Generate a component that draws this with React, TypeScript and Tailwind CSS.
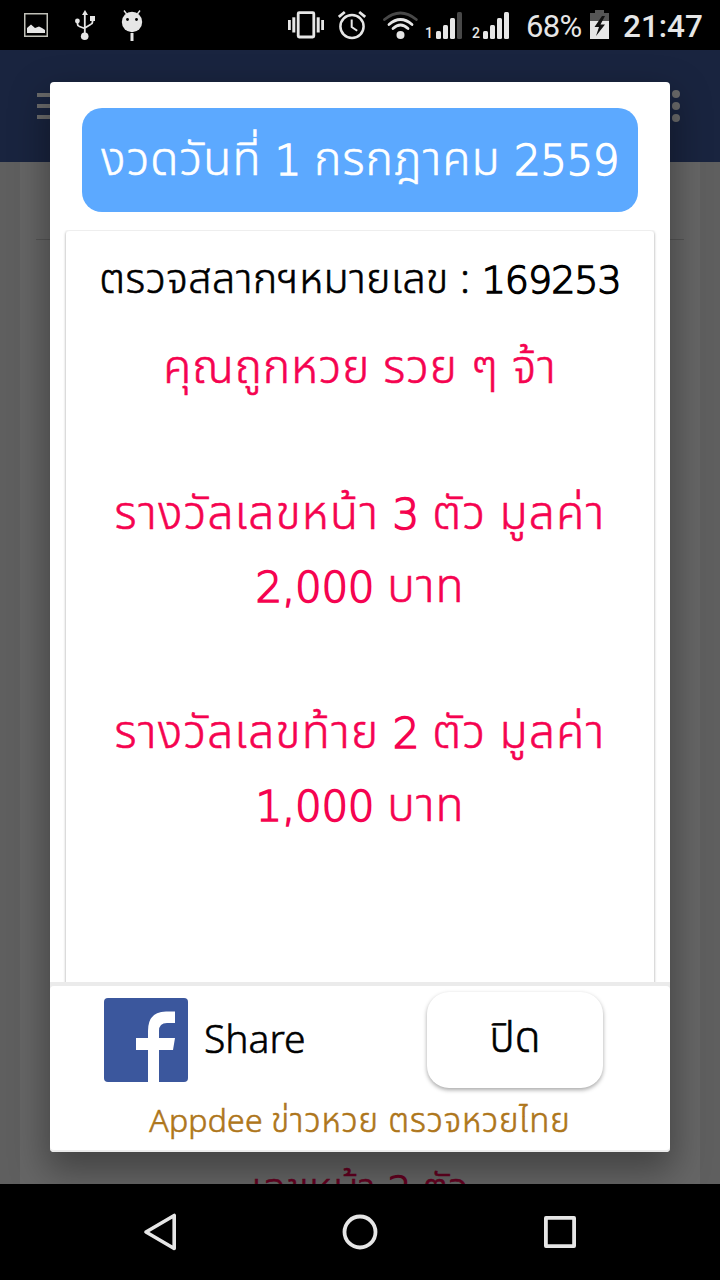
const resultLines = [
  { text: 'คุณถูกหวย รวย ๆ จ้า', className: 'tracking-[1px]' },
  { text: '', className: '' },
  { text: 'รางวัลเลขหน้า 3 ตัว มูลค่า', className: 'tracking-[1.3px]' },
  { text: '2,000 บาท', className: 'tracking-[1px]' },
  { text: '', className: '' },
  { text: 'รางวัลเลขท้าย 2 ตัว มูลค่า', className: 'tracking-[1.3px]' },
  { text: '1,000 บาท', className: 'tracking-[1px]' },
];

// Numbers use a wider face than the Thai words around them
function Mixed({ text, digits }: { text: string; digits: string }) {
  return (
    <>
      {text.split(/([\d,]+)/).map((part, i) =>
        /\d/.test(part) ? <span key={i} className={digits}>{part}</span> : part
      )}
    </>
  );
}

function SignalBars({ weak }: { weak?: boolean }) {
  return (
    <svg className="w-[26px] h-[50px]" viewBox="0 0 26 50" fill="#e6e6e6">
      <rect x="0" y="31" width="5" height="8" rx="1.5" />
      <rect x="7" y="25" width="5" height="14" rx="1.5" />
      <rect x="14" y="18" width="5" height="21" rx="1.5" />
      <rect x="21" y="12" width="5" height="27" rx="1.5" fill={weak ? '#484848' : '#e6e6e6'} />
    </svg>
  );
}

function StatusBar() {
  return (
    <div className="flex h-[50px] shrink-0 bg-black pl-6 text-[#e6e6e6] font-['Roboto',sans-serif]">
      {/* Notifications */}
      <svg className="w-6 h-[50px]" viewBox="24 0 24 50">
        <rect x="24.75" y="13.75" width="22.5" height="22.5" fill="none" stroke="#c0c0b8" strokeWidth="1.5" />
        <path d="M27 33V28l4-3.500 4 3.500 4-1.500 3 1.500 3 2v3z" fill="#e6e6e6" />
      </svg>
      <svg className="ml-[27px] w-5 h-[50px]" viewBox="75 0 20 50" fill="#e6e6e6">
        <path d="M85 10l-3 5h6z" />
        <rect x="90" y="16" width="5" height="5" />
        <circle cx="77.4" cy="21" r="2.4" />
        <circle cx="84.7" cy="36.3" r="3.8" />
        <path d="M84.8 13v22M77.500 21v3q0 2 2 2.500l5.300 2M92.500 19v3q0 2-2 2.500l-5.700 3.500" fill="none" stroke="#e6e6e6" strokeWidth="1.8" />
      </svg>
      <svg className="ml-[26px] w-[22px] h-[50px]" viewBox="121 0 22 50" fill="#e6e6e6">
        <circle cx="132" cy="22" r="10.2" />
        <path d="M124 10.500l3 4M140 10.500l-3 4" stroke="#e6e6e6" strokeWidth="1.4" />
        <rect x="130.5" y="33" width="3" height="8" />
        <circle cx="127.5" cy="19.5" r="1.4" fill="#000" />
        <circle cx="136.5" cy="19.5" r="1.4" fill="#000" />
      </svg>

      {/* System icons */}
      <svg className="ml-[145px] w-9 h-[50px]" viewBox="288 0 36 50" fill="#e6e6e6">
        <rect x="298.2" y="12.7" width="15.6" height="24.3" rx="1" fill="none" stroke="#e6e6e6" strokeWidth="2.8" />
        <rect x="288" y="20" width="2.8" height="10" />
        <rect x="292.3" y="17.3" width="3" height="15.2" />
        <rect x="316.7" y="17.3" width="3" height="15.2" />
        <rect x="321.2" y="20" width="2.8" height="10" />
      </svg>
      <svg className="ml-[14px] w-7 h-[50px]" viewBox="338 0 28 50" fill="none" stroke="#e6e6e6" strokeWidth="2.5">
        <circle cx="352" cy="26.5" r="11.6" />
        <path d="M338.800 17l6-5M365.200 17l-6-5" strokeWidth="2.8" />
        <path d="M351.700 19.500V27l5.500 3.800" strokeWidth="2" />
      </svg>
      <svg className="ml-[17px] w-[35px] h-[50px]" viewBox="383 0 35 50" fill="none" stroke="#e6e6e6" strokeWidth="2.8" strokeLinecap="round">
        <path d="M384.500 19.500q16-13 31.800 0" stroke="#484848" />
        <path d="M389 24.500q11.500-10 23 0M393 28.500q7.500-7 15 0" />
        <circle cx="400.5" cy="35" r="4" fill="#e6e6e6" stroke="none" />
      </svg>
      <span className="ml-[7px] w-[11px] pt-[25px] text-sm leading-4 font-medium">1</span>
      <SignalBars weak />
      <span className="ml-[10px] w-[11px] pt-[25px] text-sm leading-4 font-medium">2</span>
      <SignalBars />
      <span className="ml-[17px] w-[58px] pt-[9px] text-[31px] leading-9 tracking-[-0.7px]">68%</span>
      <svg className="ml-[6px] w-[19px] h-[50px]" viewBox="591 0 19 50">
        <path d="M591 21V13h5v-3h9v3h5v8z" fill="#555" />
        <path d="M591 21h19v18h-19z" fill="#e6e6e6" />
        <path d="M603 16l-7.500 11h4.500l-3 9 9-11.500h-4.500l4.500-8.500z" fill="#111" />
      </svg>
      <span className="ml-[14px] pt-[9px] text-[31.5px] leading-9 font-medium whitespace-nowrap">21:47</span>
    </div>
  );
}

function NavBar() {
  return (
    <div className="z-10 flex h-24 shrink-0 items-center justify-center gap-40 bg-black">
      <svg className="size-10" viewBox="0 0 40 40" fill="none" stroke="#e6e6e6" strokeWidth="3.6" strokeLinejoin="round">
        <path d="M34.200 3.500v33L6 20z" />
      </svg>
      <svg className="size-10" viewBox="0 0 40 40" fill="none" stroke="#e6e6e6" strokeWidth="3.8">
        <circle cx="20" cy="20" r="15.5" />
      </svg>
      <svg className="size-10" viewBox="0 0 40 40" fill="none" stroke="#e6e6e6" strokeWidth="3.8" strokeLinejoin="round">
        <rect x="5.9" y="5.9" width="28.2" height="28.2" />
      </svg>
    </div>
  );
}

function ResultDialog() {
  return (
    <div className="absolute top-[82px] left-[50px] flex h-[1070px] w-[620px] flex-col overflow-hidden rounded-[4px] bg-white font-light shadow-[0_16px_36px_4px_rgba(0,0,0,0.35)] [-webkit-text-stroke-width:0.6px]">
      <div className="mx-8 mt-[26px] h-[104px] shrink-0 rounded-[20px] bg-[#5ca9ff] text-center text-[46px] leading-[98px] tracking-[1.2px] whitespace-nowrap text-white">
        <Mixed text="งวดวันที่ 1 กรกฎาคม 2559" digits="font-['DejaVu_Sans'] text-[42px] font-extralight tracking-[-0.5px] [-webkit-text-stroke-width:1.4px]" />
      </div>

      {/* Ticket result */}
      <div className="mt-[18px] flex h-[752px] shrink-0 flex-col overflow-hidden px-4">
        <div className="h-[780px] shrink-0 rounded-[4px] border-t border-[#eee] text-center whitespace-nowrap shadow-[0_1px_3px_rgba(0,0,0,0.4)]">
          <p className="mt-[10px] h-[72px] text-[41px] leading-[72px] tracking-[0.5px] text-black">
            <Mixed text="ตรวจสลากฯหมายเลข : 169253" digits="font-['DejaVu_Sans'] text-[38px] font-extralight tracking-[-1px] [-webkit-text-stroke-width:1.4px]" />
          </p>
          <div className="mt-[16px] text-[46px] text-[#f50350]">
            {resultLines.map((line, i) => (
              <p key={i} className={`h-[73px] leading-[73px] ${line.className}`}>
                <Mixed text={line.text} digits="font-['DejaVu_Sans'] text-[42px] font-extralight tracking-[-0.3px] [-webkit-text-stroke-width:1.6px]" />
              </p>
            ))}
          </div>
        </div>
      </div>

      {/* Footer */}
      <div className="flex grow flex-col bg-[#ebebeb] pt-1 pb-[2px]">
        <div className="flex grow flex-col rounded-[4px] bg-white">
          <div className="flex h-[110px] pt-[6px] pl-[54px]">
            <svg className="mt-[6px] size-[84px]" viewBox="0 0 84 84">
              <rect width="84" height="84" rx="4" fill="#3b579d" />
              <path d="M44 84V52H32V40h12v-7q0-19.500 18-19.500h9V25h-8q-8 0-8 8v7h16l-2 12H55v32z" fill="#fff" />
            </svg>
            <span className="mt-[18px] ml-4 w-[223px] text-[39px] leading-[56px] text-black">Share</span>
            <button className="h-24 w-44 rounded-[22px] bg-white pb-[10px] text-[42px] text-black shadow-[0_2px_4px_rgba(0,0,0,0.35)]">
              ปิด
            </button>
          </div>
          <p className="text-center text-[33px] leading-[47px] tracking-[0.9px] whitespace-nowrap text-[#ae761b]">
            <span className="text-[32px] tracking-[0.2px]">Appdee </span>ข่าวหวย ตรวจหวยไทย
          </p>
        </div>
      </div>
    </div>
  );
}

export default function App() {
  return (
    <div className="relative flex h-[1280px] w-[720px] flex-col overflow-hidden bg-[#5f5f5f] font-['Noto_Sans','Noto_Sans_Thai',sans-serif]">
      <StatusBar />
      {/* Dimmed app behind the dialog */}
      <div className="flex h-28 shrink-0 items-center justify-between bg-[#19243f] pr-[40px] pl-[37px]">
        <svg className="h-[26px] w-9" viewBox="0 0 36 26" fill="#6b6b6b">
          <path d="M0 0h36v4H0zM0 11h36v4H0zM0 22h36v4H0z" />
        </svg>
        <svg className="h-8 w-2" viewBox="0 0 8 32" fill="#6b6b6b">
          <circle cx="4" cy="4" r="4" />
          <circle cx="4" cy="16" r="4" />
          <circle cx="4" cy="28" r="4" />
        </svg>
      </div>
      <div className="mx-5 flex grow flex-col overflow-hidden bg-[#666] px-4">
        <div className="h-[78px] shrink-0 border-b border-[#555]" />
        <p className="mt-[917px] h-[60px] shrink-0 text-center text-[42px] leading-[60px] font-light whitespace-nowrap text-[#640020] [-webkit-text-stroke-width:0.6px]">
          <Mixed text="เลขหน้า 3 ตัว" digits="font-['DejaVu_Sans'] text-[38px] font-extralight [-webkit-text-stroke-width:1.4px]" />
        </p>
      </div>
      <ResultDialog />
      <NavBar />
    </div>
  );
}
